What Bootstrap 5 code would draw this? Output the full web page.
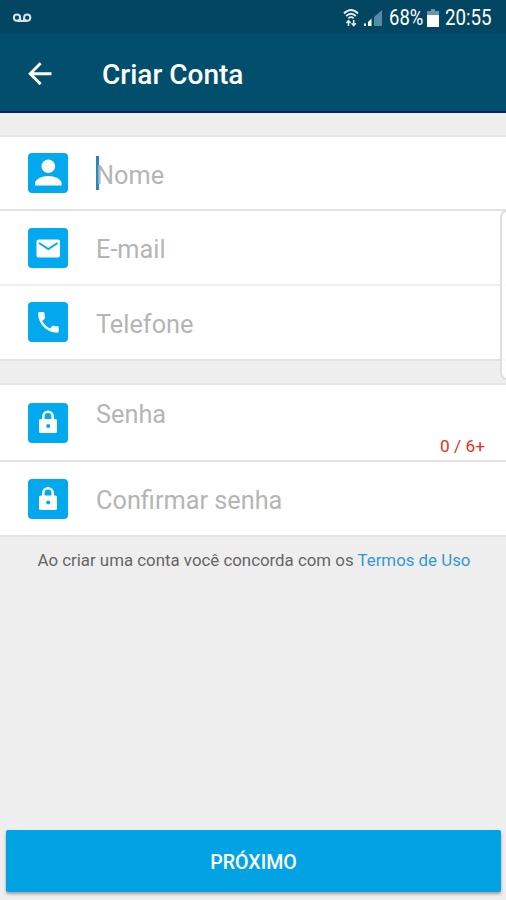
<!DOCTYPE html>
<html lang="pt-BR">
<head>
<meta charset="utf-8">
<meta name="viewport" content="width=device-width, initial-scale=1">
<title>Criar Conta</title>
<link href="https://cdn.jsdelivr.net/npm/bootstrap@5.3.0/dist/css/bootstrap.min.css" rel="stylesheet">
<style>
  body { font-family: Roboto, "Liberation Sans", sans-serif; background: #eee; height: 900px; overflow: hidden; }
  svg { display: block; flex: none; }
  .status { height: 34px; background: #024661; padding: 1px 14px 0 12px; font-size: 21.5px; line-height: 1; }
  .status .txt { display: inline-block; white-space: nowrap; transform-origin: left center; }
  .signal { margin-left: 5px; }
  .battery { margin-left: 2px; }
  .pct { width: 36px; margin-left: 7px; }
  .pct .txt { transform: scaleX(.86); }
  .clock { width: 47px; margin-left: 6px; }
  .clock .txt { transform: scaleX(.87); }
  .appbar { height: 79px; background: #014f6d; border-bottom: 2px solid #0c2068; padding: 0 0 0 26px; }
  .appbar h1 { font-size: 28px; font-weight: 500; margin-left: 48px; padding-top: 5px; line-height: 1; }
  .group { background: #fff; border-top: 2px solid #e6e6e6; margin-top: 22px; }
  .field { height: 75px; border-bottom: 2px solid #e2e2e2; padding: 0 21px 0 28px; color: #b5b5b5; font-size: 25.3px; line-height: 30px; }
  .lbl { padding-top: 5px; }
  .tile { width: 40px; height: 40px; border-radius: 4px; background: #03a9ee; margin-right: 28px; flex: none; }
  .caret { width: 3px; height: 34px; background: #2a84c8; margin-right: -3px; }
  .count { color: #e0321c; font-size: 17.3px; line-height: 20px; }
  .f-name { height: 74px; }
  .f-mail { padding-top: 1px; border-color: #ededed; }
  .f-mail .lbl { padding-top: 3px; }
  .f-phone { padding-bottom: 1px; }
  .f-pass { height: 77px; padding-top: 18px; padding-bottom: 4px; }
  .f-pass .lbl { margin-top: -3px; padding-top: 0; }
  .terms { color: #666; font-size: 16.85px; line-height: 22px; margin-top: 12px; padding-left: 2px; }
  .terms a { color: #3498d3; }
  .next { height: 62px; background: #02a3e4; border-radius: 2px; font-size: 19.6px; font-weight: 500; box-shadow: 0 2px 3px rgba(60,35,30,.4); margin: 0 5px 8px 6px; padding-top: 4px; }
  .edge { top: 210px; right: -8px; width: 14px; height: 170px; border: 2px solid #dedede; border-radius: 7px; background: rgba(255,255,255,.8); }
</style>
</head>
<body class="d-flex flex-column position-relative">
  <div class="status d-flex align-items-center text-white">
    <svg width="20" height="10" viewBox="0 0 20 10" fill="none" stroke="#d8e2ea" stroke-width="2"><circle cx="5" cy="4.7" r="3.1"/><circle cx="15.2" cy="4.7" r="3.1"/><path d="M5 8h10.2M8.2 4.7V8M12 4.7V8"/></svg>
    <svg class="ms-auto" width="16" height="20" viewBox="0 0 16 20" fill="none" stroke="#e6eef2" stroke-width="1.8"><path d="M1 5.5Q8-1.5 15 5.5M3.2 8Q8 3.5 12.8 8M5.4 10.3Q8 8 10.6 10.3"/><path d="M5.5 18v-5M3.4 15l2.1-2.4L7.6 15M10.7 12v5M8.6 15.3l2.1 2.4 2.1-2.4" stroke-width="1.5"/></svg>
    <svg class="signal" width="18" height="18" viewBox="0 0 18 18"><path d="M10 17V8l8-7v16z" fill="#568ba4"/><path d="M0 14.5h2V17H0zM4 13l3.500-3.500V17H4z" fill="#fff"/></svg>
    <div class="pct"><span class="txt">68%</span></div>
    <svg class="battery" width="12" height="18" viewBox="0 0 12 18"><path d="M4 0h4v2h4v4H0V2h4z" fill="#6795aa"/><path d="M0 6h12v12H0z" fill="#fff"/></svg>
    <div class="clock"><span class="txt">20:55</span></div>
  </div>
  <header class="appbar d-flex align-items-center text-white">
    <svg width="28" height="28" viewBox="0 0 28 28" fill="none" stroke="#fff" stroke-width="2.9"><path d="M25.5 14.700H4M14.600 4.300L4.200 14.700l10.400 10.400"/></svg>
    <h1 class="mb-0">Criar Conta</h1>
  </header>

  <main class="flex-grow-1 d-flex flex-column">
    <section class="group">
      <div class="field f-name d-flex align-items-center">
        <div class="tile"><svg width="40" height="40" viewBox="0 0 40 40" fill="#fff"><circle cx="20.300" cy="13.300" r="6.800"/><path d="M7 32.500v-2.200c0-4.200 7-7.300 13.300-7.300s13.300 3.100 13.300 7.300v2.200z"/></svg></div>
        <span class="caret"></span><span class="lbl">Nome</span>
      </div>
      <div class="field f-mail d-flex align-items-center">
        <div class="tile"><svg width="40" height="40" viewBox="0 0 40 40"><rect x="8.500" y="11.500" width="23.500" height="18" rx="2" fill="#fff"/><path d="M11 15l9.300 6 9.300-6" fill="none" stroke="#03a9ee" stroke-width="2"/></svg></div>
        <span class="lbl">E-mail</span>
      </div>
      <div class="field f-phone d-flex align-items-center">
        <div class="tile"><svg width="40" height="40" viewBox="-5.900 -5.800 35 35" fill="#fff"><path d="M6.620 10.790c1.440 2.830 3.760 5.140 6.590 6.590l2.200-2.200c.270-.270.670-.360 1.020-.240 1.120.370 2.330.570 3.570.570.550 0 1 .450 1 1V20c0 .550-.450 1-1 1-9.390 0-17-7.610-17-17 0-.550.450-1 1-1h3.500c.550 0 1 .450 1 1 0 1.250.200 2.450.570 3.570.110.350.030.740-.250 1.020z"/></svg></div>
        <span class="lbl">Telefone</span>
      </div>
    </section>
    <section class="group">
      <div class="field f-pass d-flex">
        <div class="tile"><svg width="40" height="40" viewBox="0 0 40 40"><rect x="11" y="16" width="18" height="14" rx="1.500" fill="#fff"/><path d="M15.300 17v-3.500a4.700 4.700 0 0 1 9.400 0V17" fill="none" stroke="#fff" stroke-width="2.600"/><circle cx="20.200" cy="23" r="2" fill="#03a9ee"/></svg></div>
        <span class="lbl">Senha</span>
        <span class="count ms-auto align-self-end">0 / 6+</span>
      </div>
      <div class="field f-conf d-flex align-items-center">
        <div class="tile"><svg width="40" height="40" viewBox="0 0 40 40"><rect x="11" y="16.500" width="18" height="14.500" rx="1.500" fill="#fff"/><path d="M15.300 17v-3a4.700 4.700 0 0 1 9.400 0v3" fill="none" stroke="#fff" stroke-width="2.600"/><circle cx="20.200" cy="23.400" r="2" fill="#03a9ee"/></svg></div>
        <span class="lbl">Confirmar senha</span>
      </div>
    </section>
    <p class="terms text-center mb-0">Ao criar uma conta você concorda com os <a href="#" class="text-decoration-none">Termos de Uso</a></p>
    <button type="button" class="next border-0 text-white mt-auto">PRÓXIMO</button>
  </main>
  <div class="edge position-absolute"></div>
<script src="https://cdn.jsdelivr.net/npm/bootstrap@5.3.0/dist/js/bootstrap.bundle.min.js"></script>
</body>
</html>
